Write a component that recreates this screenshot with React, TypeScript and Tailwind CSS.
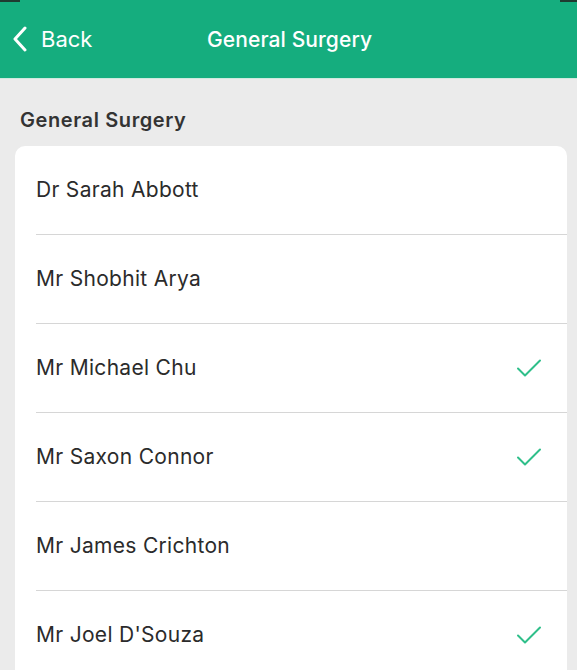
import React from 'react'

const people = [
  { name: 'Dr Sarah Abbott', checked: false },
  { name: 'Mr Shobhit Arya', checked: false },
  { name: 'Mr Michael Chu', checked: true },
  { name: 'Mr Saxon Connor', checked: true },
  { name: 'Mr James Crichton', checked: false },
  { name: "Mr Joel D'Souza", checked: true },
]

function Check() {
  return (
    <svg width="26" height="20" viewBox="0 0 26 20" fill="none">
      <path d="M2 10.5 L9 17.5 L24 2.5" stroke="#2fbf8a" strokeWidth="2" strokeLinecap="round" strokeLinejoin="round" />
    </svg>
  )
}

export default function App() {
  return (
    <div className="w-[577px] h-[670px] overflow-hidden bg-[#ebebeb] font-['Inter',sans-serif]">
      <header className="relative h-[79px] bg-[#15ad7e] border-b border-[#cfe9df] flex items-center">
        <div className="absolute left-0 top-0 w-[20px] h-[2px] bg-[#1f3a30]" />
        <div className="absolute right-0 top-0 w-[17px] h-[2px] bg-[#1f3a30]" />
        <button className="flex items-center pl-[12px] text-white text-[22px] gap-[13px]">
          <svg width="16" height="26" viewBox="0 0 16 26" fill="none">
            <path d="M13 2 L3 13 L13 24" stroke="white" strokeWidth="3" strokeLinecap="round" strokeLinejoin="round" />
          </svg>
          <span className="leading-none">Back</span>
        </button>
        <h1 className="absolute left-[207px] text-white text-[21px] font-medium leading-none tracking-[0.1px]">General Surgery</h1>
      </header>

      <div className="pt-[29px] px-[20px] pb-[14px]">
        <h2 className="text-[#333333] text-[20px] font-semibold leading-6 tracking-[0.6px]">General Surgery</h2>
      </div>

      <div className="mx-[15px] w-[552px] bg-white rounded-[10px]">
        {people.map((p, i) => (
          <div key={i} className="pl-[21px]">
            <div className={`flex items-center justify-between pr-[25px] ${i > 0 ? 'h-[89px] border-t border-[#d6d6d6]' : 'h-[88px]'}`}>
              <span className="text-[#2b2b2b] text-[21px] tracking-[0.3px]">{p.name}</span>
              {p.checked && <Check />}
            </div>
          </div>
        ))}
      </div>
    </div>
  )
}
